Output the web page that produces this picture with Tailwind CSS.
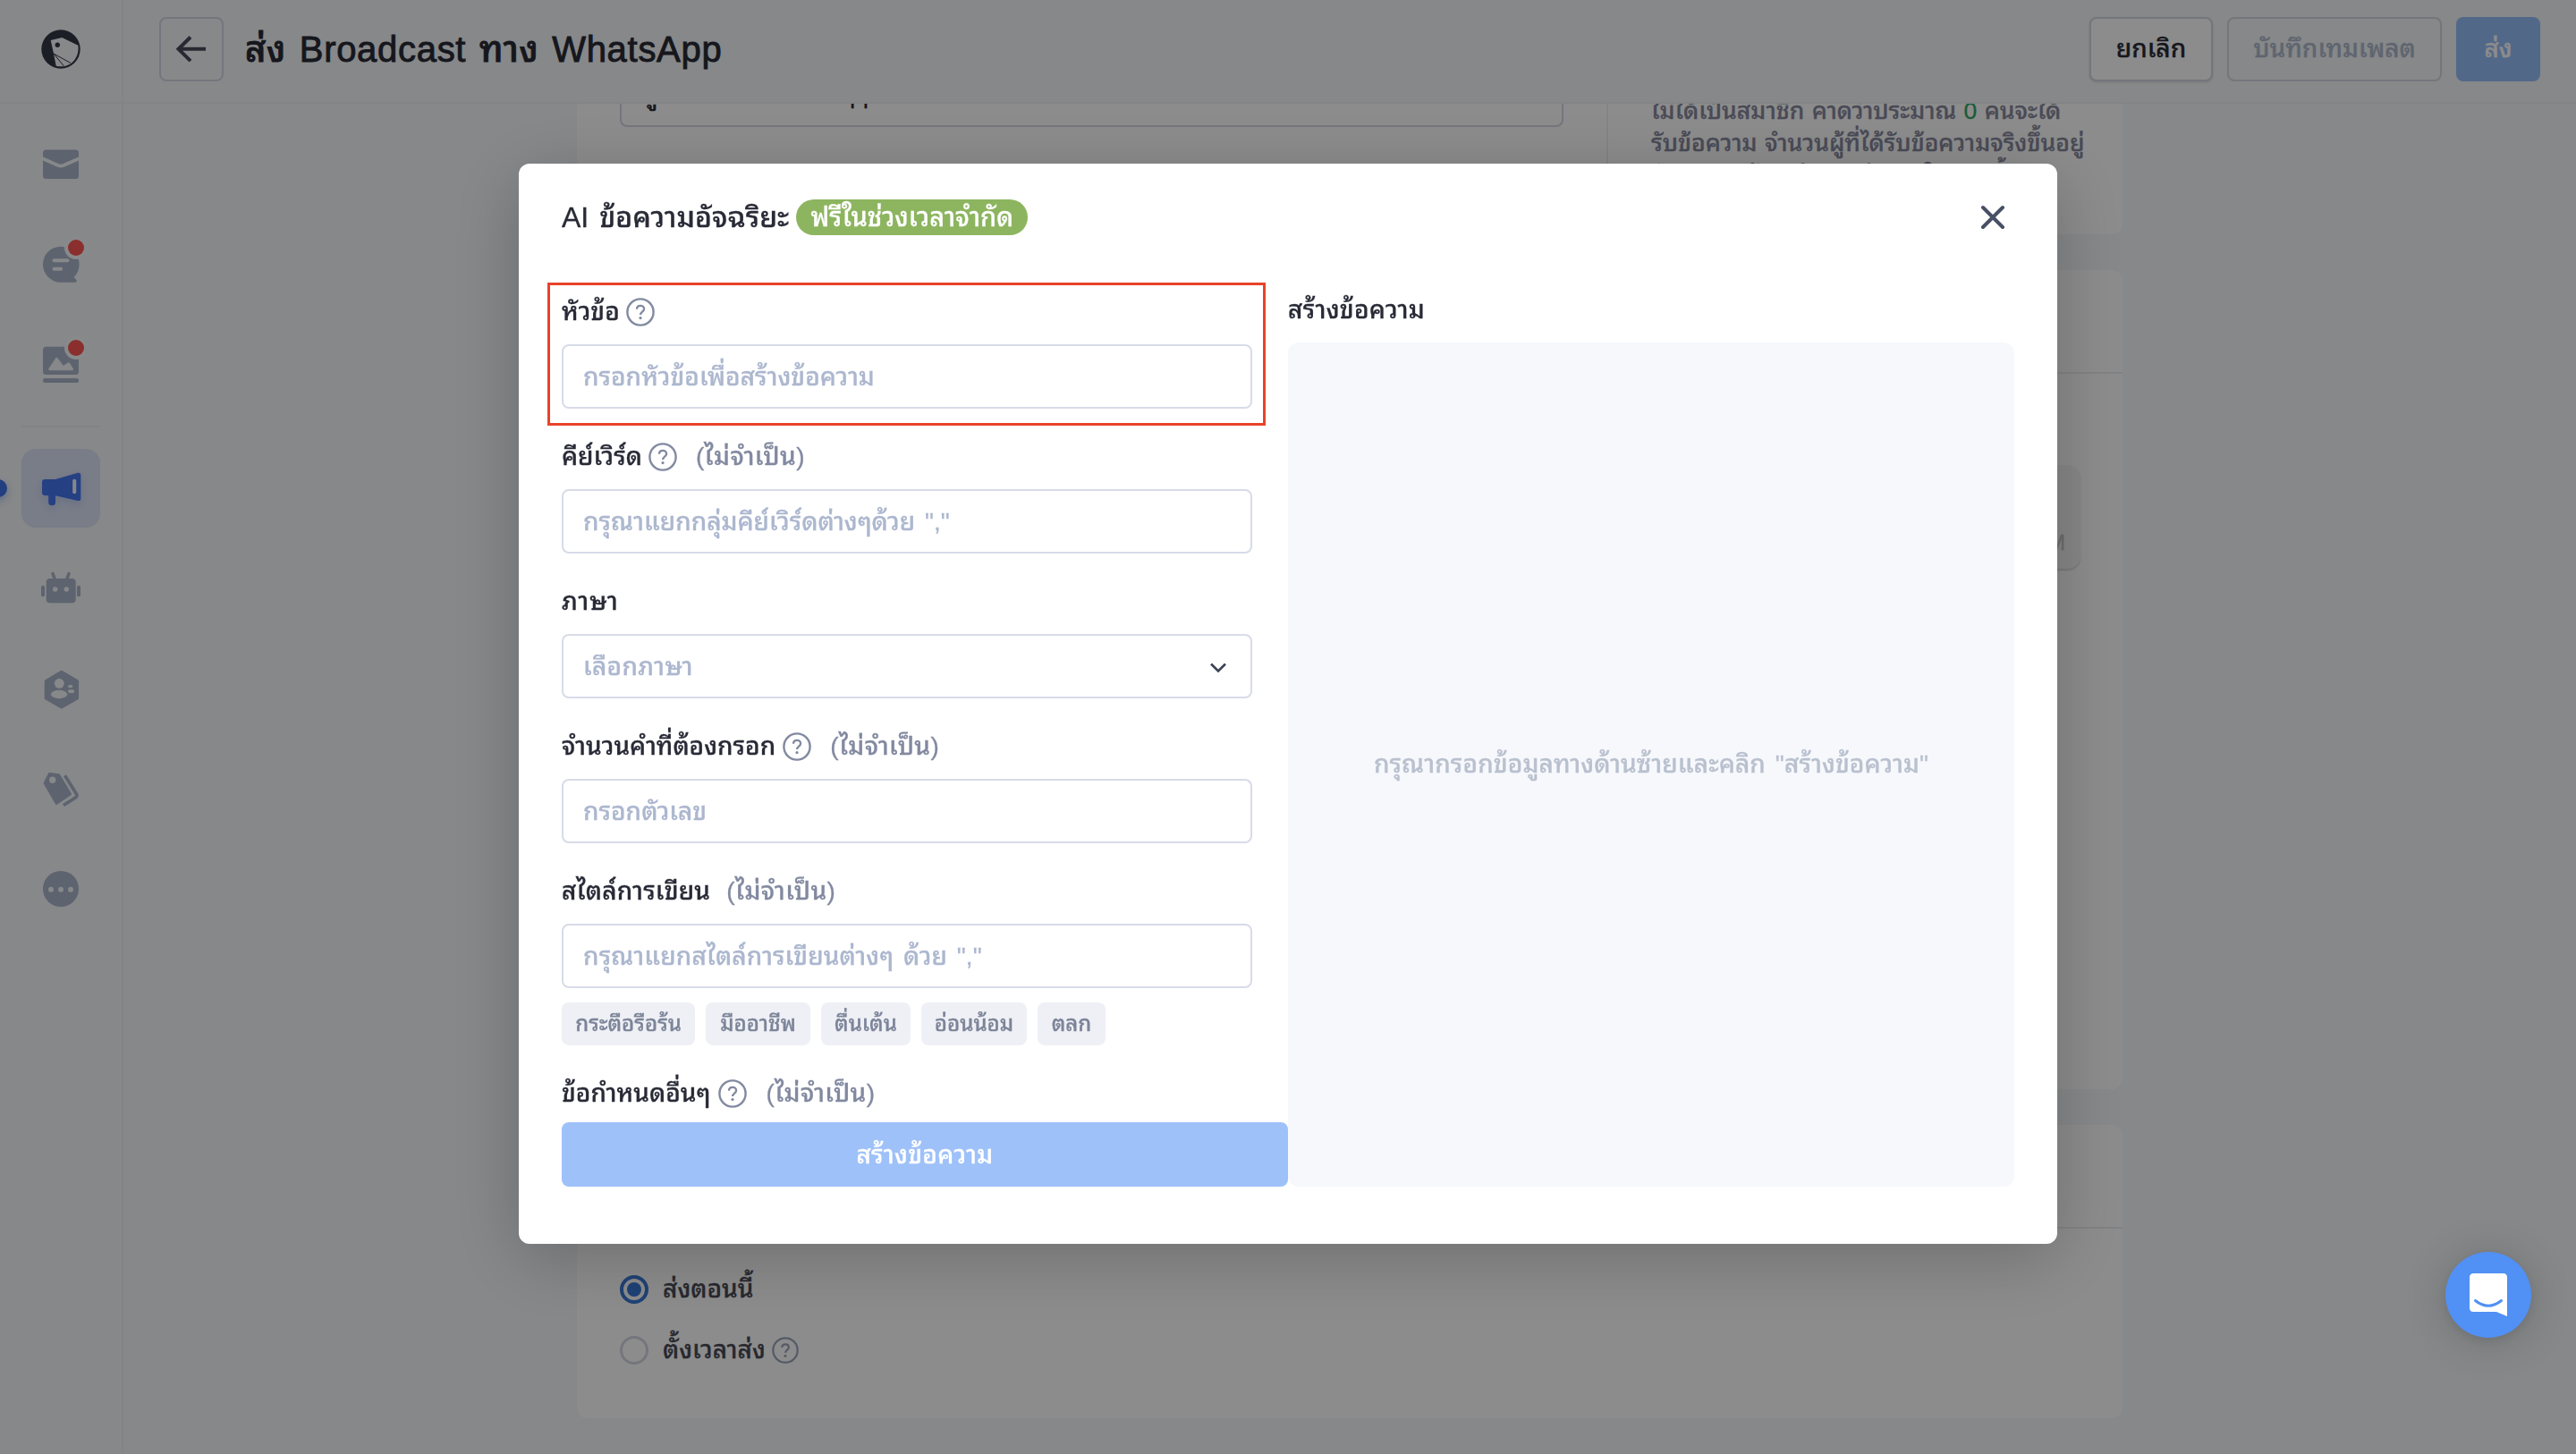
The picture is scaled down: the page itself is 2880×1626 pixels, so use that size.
<!DOCTYPE html>
<html lang="th">
<head>
    <meta charset="UTF-8">
    <title>ส่ง Broadcast ทาง WhatsApp</title>
    <script src="https://cdn.jsdelivr.net/npm/@tailwindcss/browser@4"></script>
</head>
<body class="w-[2880px] h-[1626px] overflow-hidden bg-[#f5f7f9] font-['Liberation_Sans','Noto_Sans_Thai_Looped',sans-serif] font-medium text-[28px] leading-9 text-[#282a36] whitespace-nowrap [word-spacing:3px] [-webkit-text-stroke:0.3px]">

    <svg class="hidden">
        <symbol id="help" viewBox="0 0 32 32">
            <circle cx="16" cy="16" r="14.6" fill="none" stroke="currentColor" stroke-width="2.4"/>
            <path d="M12 12.8c0-2.4 1.8-3.9 4.1-3.9s4 1.5 4 3.6c0 3.1-4 3.2-4 6.4" fill="none" stroke="currentColor" stroke-width="2.3"/>
            <circle cx="16" cy="22.6" r="1.6" fill="currentColor"/>
        </symbol>
    </svg>

    <div class="flex h-full">

        <!-- Sidebar -->
        <aside class="w-[138px] shrink-0 border-r-2 border-[#edf0f5] text-[#a9b4cb]">
            <div class="h-[116px] border-b-2 border-[#edf0f5] flex justify-center pt-[33px]">
                <svg class="w-11 h-11" viewBox="0 0 44 44">
                    <circle cx="22" cy="22" r="21.7" fill="#333746"/>
                    <path d="M10.7 12 23.3 9l18 8.7C43 29 36 40 25 41.2c-3 .3-6 .1-8.3-.5L14 27z" fill="#f5f7f9"/>
                    <circle cx="18.3" cy="17.3" r="2.7" fill="#333746"/>
                    <path d="M14 27l11.5 14M14 27l19 10.5" stroke="#333746" stroke-width="1"/>
                </svg>
            </div>
            <nav class="flex flex-col items-center gap-6 pt-6">
                <svg class="w-22 h-22" viewBox="0 0 88 88" fill="currentColor">
                    <rect x="24" y="27.5" width="40" height="32.5" rx="3.5"/>
                    <path d="M23 37l18 8q3 1.2 6 0l18-8" fill="none" stroke="#f5f7f9" stroke-width="4"/>
                </svg>
                <svg class="w-22 h-22" viewBox="0 0 88 88" fill="currentColor">
                    <path d="M44 23.7a20 20 0 1 0 0 40h16c2 0 2.3-2 1-3.2L58.5 58A20 20 0 0 0 44 23.7z"/>
                    <path d="M36.5 39.3h15M36.5 48.7h7.7" stroke="#f5f7f9" stroke-width="4" stroke-linecap="round"/>
                    <circle cx="61" cy="25" r="13" fill="#f8fafb"/>
                    <circle cx="61" cy="25" r="9" fill="#fb5652"/>
                </svg>
                <svg class="w-22 h-22" viewBox="0 0 88 88" fill="currentColor">
                    <rect x="24" y="23.7" width="40" height="31.3" rx="3.5"/>
                    <rect x="24" y="59" width="40" height="5" rx="2.5"/>
                    <path d="M31.5 49 39.3 37l7.2 9.500 6.300-4 4 6.500z" fill="#f5f7f9" stroke="#f5f7f9" stroke-width="2.5" stroke-linejoin="round"/>
                    <circle cx="61" cy="25" r="13" fill="#f8fafb"/>
                    <circle cx="61" cy="25" r="9" fill="#fb5652"/>
                </svg>
                <div class="w-22 h-0.5 bg-[#eceff3]"></div>
                <div class="relative">
                    <div class="absolute -left-9 top-[34px] w-5 h-5 rounded-full bg-[#3f74ea] shadow-[0_4px_8px_rgba(63,116,234,.4)]"></div>
                    <div class="w-22 h-22 rounded-2xl bg-[#dce3f6]">
                        <svg class="w-22 h-22 text-[#4576f0] drop-shadow-[0_4px_4px_rgba(69,118,240,.2)]" viewBox="0 0 88 88" fill="currentColor">
                            <path d="M26 34h12l25-7.2q3.3-.6 3.3 2.5v26.400q0 3-3.300 2.200L38 52.200v8q-.3 3-3.900 3t-3.900-3v-7.700l-2-.5H26q-3-.3-3-3V37q0-3 3-3z"/>
                            <path d="M59.2 35.7v12.6" stroke="#f5f7f9" stroke-width="4" stroke-linecap="round"/>
                        </svg>
                    </div>
                </div>
                <svg class="w-22 h-22" viewBox="0 0 88 88" fill="currentColor">
                    <path d="M35 27.5l2.2 6M53 27.5l-2.2 6" stroke="currentColor" stroke-width="3.6" stroke-linecap="round"/>
                    <rect x="27.7" y="33" width="33" height="27.3" rx="4"/>
                    <rect x="22" y="40.7" width="4" height="12.5" rx="2"/>
                    <rect x="62" y="40.7" width="4" height="12.5" rx="2"/>
                    <circle cx="37.7" cy="45" r="2.8" fill="#f5f7f9"/>
                    <circle cx="50.3" cy="45" r="2.8" fill="#f5f7f9"/>
                </svg>
                <svg class="w-22 h-22" viewBox="0 0 88 88" fill="currentColor">
                    <path d="M44.7 25.5 62.3 35.7v19L44.7 64.7 27.5 54.7v-19z" stroke="currentColor" stroke-width="3.5" stroke-linejoin="round"/>
                    <g fill="#f5f7f9">
                        <circle cx="42.3" cy="38.3" r="5.5"/>
                        <ellipse cx="42" cy="50.5" rx="9.2" ry="4.7"/>
                        <ellipse cx="54.7" cy="41.5" rx="2.8" ry="1.8"/>
                        <ellipse cx="55.6" cy="47" rx="3.6" ry="2"/>
                    </g>
                </svg>
                <svg class="w-22 h-22" viewBox="0 0 88 88" fill="currentColor">
                    <path d="M31.3 27.5 41.7 28.7 54.5 50 39.2 60.3 26.2 38z" stroke="currentColor" stroke-width="3" stroke-linejoin="round"/>
                    <path d="M48.5 29.3 61.5 50q1.3 2.2-.8 3.8L47 62.5" fill="none" stroke="currentColor" stroke-width="3.6"/>
                    <circle cx="34.7" cy="34.3" r="3.7" fill="#f5f7f9"/>
                </svg>
                <svg class="w-22 h-22" viewBox="0 0 88 88" fill="currentColor">
                    <circle cx="44" cy="44" r="20"/>
                    <g fill="#f5f7f9">
                        <circle cx="33" cy="44.8" r="3"/>
                        <circle cx="44" cy="44.8" r="3"/>
                        <circle cx="55" cy="44.8" r="3"/>
                    </g>
                </svg>
            </nav>
        </aside>

        <div class="flex-1 flex flex-col">

            <!-- Header -->
            <header class="relative z-10 h-[116px] shrink-0 border-b-2 border-[#edf0f5] bg-[#f5f7f9] flex items-center pl-10 pr-10 pb-1">
                <button class="w-18 h-18 rounded-lg border-2 border-[#d5d7e3]">
                    <svg class="w-[68px] h-[68px]" viewBox="2 2 68 68" fill="none" stroke="#484b5c" stroke-width="4">
                        <path d="M52 35.8H21M35 22.5 21.5 35.8 35 49.2"/>
                    </svg>
                </button>
                <h1 class="ml-6 flex-1 text-[40px] leading-[48px] [-webkit-text-stroke:0.9px] tracking-[0.7px]">ส่ง Broadcast ทาง WhatsApp</h1>
                <div class="flex gap-4">
                    <button class="w-[138px] h-18 rounded-lg border-2 border-[#d5d7e3] bg-white shadow-sm">ยกเลิก</button>
                    <button class="w-[240px] h-18 rounded-lg border-2 border-[#d5d7e3] text-[#adb8cc]">บันทึกเทมเพลต</button>
                    <button class="w-[94px] h-18 rounded-lg bg-[#96bdf9] text-white">ส่ง</button>
                </div>
            </header>

            <!-- Cards -->
            <main class="-mt-[46px] ml-[507px] w-[1728px] flex flex-col gap-10">
                <section class="h-[192px] bg-white rounded-b-xl flex">
                    <div class="w-[1153px] pl-12 border-r-2 border-[#edf0f5]">
                        <div class="w-[1055px] h-18 rounded-lg border-2 border-[#d5d7e3] px-[22px] flex items-center tracking-[-0.7px]">ผู้ติดต่อทาง WhatsApp ทั้งหมด</div>
                    </div>
                    <p class="pl-12 pt-9 text-[26.5px] text-[#85879c] [word-spacing:1px]">ไม่ได้เป็นสมาชิก คาดว่าประมาณ <span class="text-[#31a866]">0</span> คนจะได้<br>รับข้อความ จำนวนผู้ที่ได้รับข้อความจริงขึ้นอยู่<br>กับสถานะผู้ติดต่อและจำนวนในขณะนั้น</p>
                </section>
                <section class="h-[916px] bg-white rounded-xl">
                    <div class="h-[116px] border-b-2 border-[#ebedf0]"></div>
                    <div class="flex justify-end pt-[102px] pr-[47px]">
                        <div class="w-[420px] h-[116px] rounded-[14px] bg-[#f5f5f5] shadow-[0_2px_2px_rgba(0,0,0,.15)] flex items-end justify-end pr-[17px] pb-[13px] text-2xl text-[#c4c4c4]">12:00 PM</div>
                    </div>
                </section>
                <section class="h-[328px] bg-white rounded-xl">
                    <div class="h-[116px] border-b-2 border-[#ebedf0]"></div>
                    <div class="pl-12 pt-[50px] flex flex-col gap-8 text-[#484a56]">
                        <label class="flex items-center">
                            <span class="w-8 h-8 mr-4 rounded-full border-4 border-[#3878d6] flex items-center justify-center"><span class="w-4 h-4 rounded-full bg-[#3878d6]"></span></span>
                            ส่งตอนนี้
                        </label>
                        <label class="flex items-center">
                            <span class="w-8 h-8 mr-4 rounded-full border-3 border-[#d5d7e3]"></span>
                            ตั้งเวลาส่ง
                            <svg class="w-[30px] h-[30px] ml-[7px] text-[#9aa5ba]"><use href="#help"/></svg>
                        </label>
                    </div>
                </section>
            </main>
        </div>
    </div>

    <!-- Modal -->
    <div class="fixed inset-0 z-20 bg-black/45 pt-[183px] pl-[580px]">
        <div class="w-[1720px] h-[1208px] px-12 bg-white rounded-xl shadow-[0_16px_80px_rgba(0,0,0,.22)]">
            <div class="h-[120px] flex items-center">
                <h2 class="text-[32px] leading-10">AI ข้อความอัจฉริยะ</h2>
                <span class="ml-2 h-10 w-[259px] rounded-full bg-[#8db560] text-white text-center text-[29px] leading-[41px]">ฟรีในช่วงเวลาจำกัด</span>
                <svg class="ml-auto mr-2 w-8 h-8" viewBox="0 0 32 32" stroke="#475064" stroke-width="4" stroke-linecap="round">
                    <path d="M5 5l22 22M27 5L5 27"/>
                </svg>
            </div>

            <div class="flex pt-2.5">
                <div class="w-[812px]">
                    <div class="w-[772px] flex flex-col gap-[18px]">
                        <div class="relative">
                            <div class="absolute -left-4 top-[3px] w-[803px] h-40 border-3 border-[#e8432a]"></div>
                            <div class="h-18 flex items-center">หัวข้อ<svg class="w-8 h-8 ml-[7px] text-[#8289a0]"><use href="#help"/></svg></div>
                            <div class="h-18 rounded-lg border-2 border-[#d8dbe8] px-[22px] pt-px flex items-center text-[#acb7cf]">กรอกหัวข้อเพื่อสร้างข้อความ</div>
                        </div>
                        <div>
                            <div class="h-18 flex items-center">คีย์เวิร์ด<svg class="w-8 h-8 ml-[7px] text-[#8289a0]"><use href="#help"/></svg><span class="ml-[21px] tracking-[0.4px] text-[#8289a0]">(ไม่จำเป็น)</span></div>
                            <div class="h-18 rounded-lg border-2 border-[#d8dbe8] px-[22px] pt-px flex items-center text-[#acb7cf]">กรุณาแยกกลุ่มคีย์เวิร์ดต่างๆด้วย ","</div>
                        </div>
                        <div>
                            <div class="h-18 flex items-center tracking-[0.8px]">ภาษา</div>
                            <div class="h-18 rounded-lg border-2 border-[#d8dbe8] pl-[22px] pr-[25px] pt-px flex items-center justify-between text-[#acb7cf] tracking-[0.3px]">เลือกภาษา
                                <svg class="w-[22px] h-[22px]" viewBox="0 0 22 22" fill="none" stroke="#3c4254" stroke-width="2.6"><path d="M3 7.5l8 8 8-8"/></svg>
                            </div>
                        </div>
                        <div>
                            <div class="h-18 flex items-center">จำนวนคำที่ต้องกรอก<svg class="w-8 h-8 ml-2 text-[#8289a0]"><use href="#help"/></svg><span class="ml-[21px] tracking-[0.4px] text-[#8289a0]">(ไม่จำเป็น)</span></div>
                            <div class="h-18 rounded-lg border-2 border-[#d8dbe8] px-[22px] pt-px flex items-center text-[#acb7cf]">กรอกตัวเลข</div>
                        </div>
                        <div>
                            <div class="h-18 flex items-center"><span class="tracking-[0.2px]">สไตล์การเขียน</span><span class="ml-[18px] tracking-[0.4px] text-[#8289a0]">(ไม่จำเป็น)</span></div>
                            <div class="h-18 rounded-lg border-2 border-[#d8dbe8] px-[22px] pt-px flex items-center text-[#acb7cf] tracking-[0.1px]">กรุณาแยกสไตล์การเขียนต่างๆ ด้วย ","</div>
                        </div>
                    </div>
                    <div class="mt-4 flex gap-3 text-2xl leading-[48px] text-center text-[#7c8499]">
                        <span class="w-[149px] rounded-lg bg-[#eff0f5]">กระตือรือร้น</span>
                        <span class="w-[117px] rounded-lg bg-[#eff0f5]">มืออาชีพ</span>
                        <span class="w-[100px] rounded-lg bg-[#eff0f5]">ตื่นเต้น</span>
                        <span class="w-[118px] rounded-lg bg-[#eff0f5]">อ่อนน้อม</span>
                        <span class="w-[76px] rounded-lg bg-[#eff0f5]">ตลก</span>
                    </div>
                    <div class="mt-[22px] h-16 flex items-center">ข้อกำหนดอื่นๆ<svg class="w-8 h-8 ml-[9px] text-[#8289a0]"><use href="#help"/></svg><span class="ml-[21px] tracking-[0.4px] text-[#8289a0]">(ไม่จำเป็น)</span></div>
                    <button class="w-full h-18 pt-px rounded-lg bg-[#9ec1f9] text-white tracking-[0.3px]">สร้างข้อความ</button>
                </div>

                <div class="w-[812px]">
                    <div class="h-[70px] pb-0.5 flex items-center tracking-[0.3px]">สร้างข้อความ</div>
                    <div class="h-[944px] rounded-xl bg-[#f6f8fc] flex items-center justify-center text-[#b9c0ce] tracking-[0.1px]">กรุณากรอกข้อมูลทางด้านซ้ายและคลิก "สร้างข้อความ"</div>
                </div>
            </div>
        </div>
    </div>

    <!-- Chat launcher -->
    <button class="fixed z-30 right-[50px] bottom-[130px] w-24 h-24 rounded-full bg-[#5190f4] shadow-[0_4px_48px_rgba(0,0,0,.18),0_4px_12px_rgba(0,0,0,.08)]">
        <svg class="w-24 h-24" viewBox="0 0 96 96">
            <path d="M31.5 24h33q4.5 0 4.5 4.5V72L57 67H31.5Q27 67 27 62.5v-34Q27 24 31.5 24z" fill="#fff"/>
            <path d="M33.5 54.5q14.5 11.5 29 0" fill="none" stroke="#5190f4" stroke-width="3" stroke-linecap="round"/>
        </svg>
    </button>
</body>
</html>
